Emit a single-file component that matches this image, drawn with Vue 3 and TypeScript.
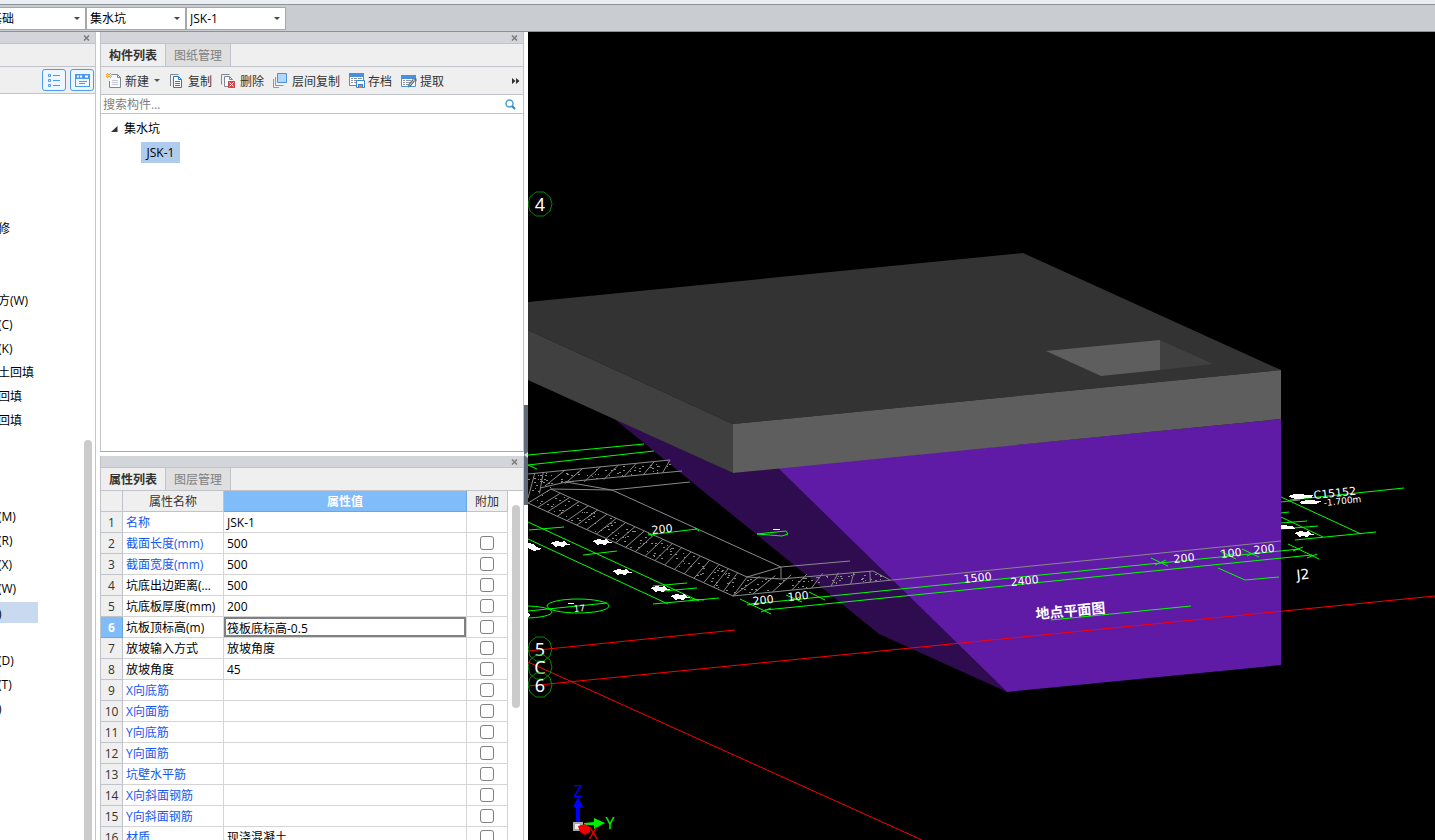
<script setup lang="ts">
import { ref } from 'vue'

interface Combo { label: string; value: string }
interface PropRow { name: string; value: string; linked: boolean; extra: boolean }
interface Segment { x1: number; y1: number; x2: number; y2: number }
interface Dot { x: number; y: number; w: number }

const combos: Combo[] = [
  { label: '构件大类', value: '基础' },
  { label: '构件类型', value: '集水坑' },
  { label: '构件名称', value: 'JSK-1' },
]

const navRows: string[] = [
  '', '', '', '', '', '修', '', '', '方(W)', '(C)', '(K)', '土回填', '回填', '回填',
  '', '', '', '(M)', '(R)', '(X)', '(W)', ')', '', '(D)', '(T)', ')',
]
const activeNav = 21

const search = ref('')
const activeRow = 5

const rows = ref<PropRow[]>([
  { name: '名称', value: 'JSK-1', linked: true, extra: false },
  { name: '截面长度(mm)', value: '500', linked: true, extra: true },
  { name: '截面宽度(mm)', value: '500', linked: true, extra: true },
  { name: '坑底出边距离(mm)', value: '500', linked: false, extra: true },
  { name: '坑底板厚度(mm)', value: '200', linked: false, extra: true },
  { name: '坑板顶标高(m)', value: '筏板底标高-0.5', linked: false, extra: true },
  { name: '放坡输入方式', value: '放坡角度', linked: false, extra: true },
  { name: '放坡角度', value: '45', linked: false, extra: true },
  { name: 'X向底筋', value: '', linked: true, extra: true },
  { name: 'X向面筋', value: '', linked: true, extra: true },
  { name: 'Y向底筋', value: '', linked: true, extra: true },
  { name: 'Y向面筋', value: '', linked: true, extra: true },
  { name: '坑壁水平筋', value: '', linked: true, extra: true },
  { name: 'X向斜面钢筋', value: '', linked: true, extra: true },
  { name: 'Y向斜面钢筋', value: '', linked: true, extra: true },
  { name: '材质', value: '现浇混凝土', linked: true, extra: true },
])

/* Concrete hatch: strokes and aggregate specks inside the section bands */
const hatch: Segment[] = []
const dots: Dot[] = []
let seed = 7
function rand(): number {
  seed = (seed * 16807) % 2147483647
  return seed / 2147483647
}
function band(a: number[], b: number[], c: number[], d: number[], count: number, lean: number, specks: number): void {
  const at = (p: number[], q: number[], t: number) => [p[0] + (q[0] - p[0]) * t, p[1] + (q[1] - p[1]) * t]
  for (let i = 0; i <= count; i++) {
    const t = i / count
    if (t + lean > 1.1) continue
    const low = at(a, b, t)
    const high = at(c, d, Math.min(1, t + lean))
    hatch.push({ x1: low[0], y1: low[1], x2: high[0], y2: high[1] })
  }
  for (let i = 0; i < specks; i++) {
    const t = rand()
    const p = at(at(a, b, t), at(c, d, t), 0.1 + rand() * 0.8)
    dots.push({ x: p[0], y: p[1], w: 1 + Math.round(rand() * 1.4) })
  }
}
band([528, 503], [733, 596], [551, 489], [747, 577], 21, 0, 130)
band([545, 486], [682, 471], [545, 472], [670, 460], 7, 0.16, 50)
band([528, 498], [551, 489], [528, 474], [545, 472], 2, 0.4, 22)
band([733, 596], [890, 580], [747, 577], [873, 571], 8, 0.1, 60)

const greenLines = [
  'M528 455L644 444', 'M528 465L654 451', 'M528 465L537 469',
  'M528 522L699 601', 'M528 539L668 604', 'M529 530L564 527', 'M583 555L617 551',
  'M653 586L687 583', 'M663 591L697 588', 'M653 604L719 598', 'M690 599L704 600',
  'M528 611L607 603', 'M648 535L697 529', 'M648 533L652 536', 'M695 528L699 531',
  'M757 534L786 531L788 534L782 536Z',
  'M751 604L1300 549', 'M765 610L1312 555', 'M740 599L771 614', 'M786 595L802 602',
  'M809 592L825 600', 'M791 601L800 597', 'M747 605L757 603', 'M761 612L771 608',
  'M1151 558L1168 566', 'M1220 551L1236 559', 'M1242 549L1259 557', 'M1288 544L1319 559',
  'M1155 565L1166 560', 'M1224 557L1235 553', 'M1247 556L1256 552', 'M1293 551L1303 547', 'M1307 558L1317 554',
  'M1051 620L1191 606', 'M1218 568L1245 580L1279 577',
  'M1290 500L1404 488', 'M1281 497L1361 534', 'M1295 540L1376 532', 'M1281 517L1323 537',
  'M1281 513L1289 512', 'M1281 523L1307 521', 'M1281 529L1318 526',
]

const marks: { x: number; y: number }[] = [
  { x: 560, y: 544 }, { x: 602, y: 542 }, { x: 622, y: 572 }, { x: 660, y: 589 }, { x: 680, y: 597 },
  { x: 1304, y: 534 },
]

const dims: { x: number; y: number; text: string }[] = [
  { x: 652, y: 534, text: '200' },
  { x: 753, y: 605, text: '200' },
  { x: 788, y: 601, text: '100' },
  { x: 964, y: 583, text: '1500' },
  { x: 1011, y: 586, text: '2400' },
  { x: 1174, y: 563, text: '200' },
  { x: 1221, y: 558, text: '100' },
  { x: 1254, y: 554, text: '200' },
]

const axes: { y: number; text: string }[] = [
  { y: 204, text: '4' }, { y: 649, text: '5' }, { y: 667, text: 'C' }, { y: 685, text: '6' },
]
</script>

<template>
  <div class="app">
    <div class="ribbon-edge"></div>
    <div class="combo-bar">
      <label v-for="c in combos" :key="c.label" class="combo">
        <select :aria-label="c.label"><option>{{ c.value }}</option></select>
      </label>
    </div>

    <main class="work">
      <aside class="nav">
        <div class="dock-head"><button class="close" aria-label="关闭导航"><svg viewBox="0 0 7 6"><path d="M1 0.5L6 5.5M6 0.5L1 5.5" /></svg></button></div>
        <div class="nav-title"></div>
        <div class="nav-tools">
          <button class="view-btn" aria-label="列表视图">
            <svg width="22" height="20" viewBox="0 0 22 20" fill="none" stroke="#4a9bf0">
              <path d="M5.5 4.500h2v2h-2zM5.500 9.500h2v2h-2zM5.500 14.500h2v2h-2z" stroke-width="1" />
              <path d="M10 5.500h7M10 10.500h7M10 15.500h7" />
            </svg>
          </button>
          <button class="view-btn" aria-label="窗口视图">
            <svg width="22" height="20" viewBox="0 0 22 20">
              <path d="M4 4h15v13H4z" fill="#4a9bf0" />
              <path d="M5 9h13v7H5z" fill="#eef6ff" />
              <path d="M6 6.500h2M9 6.500h2M14 6.500h3" stroke="#fff" stroke-width="2" />
              <path d="M8 11.500h8M8 13.500h6" stroke="#4a9bf0" />
            </svg>
          </button>
        </div>
        <div class="nav-body">
          <ul>
            <li v-for="(n, i) in navRows" :key="i"><span :class="{ on: i === activeNav }">{{ n }}</span></li>
          </ul>
          <div class="nav-scroll"><div class="thumb"></div></div>
        </div>
      </aside>

      <section class="panels">
        <div class="panel list-panel">
          <div class="dock-head"><button class="close" aria-label="关闭构件列表"><svg viewBox="0 0 7 6"><path d="M1 0.500L6 5.500M6 0.500L1 5.500" /></svg></button></div>
          <div class="tabs"><button class="tab active">构件列表</button><button class="tab">图纸管理</button></div>
          <div class="tools">
            <button class="tool">
              <svg class="ico" viewBox="0 0 16 16" fill="none">
                <path d="M6 1.500h5.500L14.500 4.500v10h-11V8" stroke="#7c8a96" fill="#fafafa" />
                <path d="M11.500 1.500v3h3" stroke="#7c8a96" />
                <path d="M6 7.500h6M6 9.500h6M6 11.500h6" stroke="#c5cbd1" />
                <path d="M1 0h1v1H1zM4 0h1v1H4zM2 1h2v1H2zM1 2h1v1H1zM4 2h1v1H4zM2 3h2v1H2zM1 4h1v1H1zM4 4h1v1H4zM0 1h1v1H0zM5 1h1v1H5zM0 3h1v1H0zM5 3h1v1H5z" fill="#f39a1e" />
              </svg><span>新建</span><i class="caret"></i>
            </button>
            <button class="tool">
              <svg class="ico" viewBox="0 0 16 16" fill="none">
                <path d="M1.500 13V1.500h8" stroke="#7c8a96" />
                <path d="M4.500 3.500h5l3 3v8h-8z" stroke="#2e78c8" fill="#fff" />
                <path d="M9.500 3.500v3h3M6 8.500h5M6 10.500h5M6 12.500h5" stroke="#2e78c8" />
              </svg><span>复制</span>
            </button>
            <button class="tool">
              <svg class="ico" viewBox="0 0 16 16" fill="none">
                <path d="M0.500 11.500V1.500h8" stroke="#7c8a96" />
                <path d="M7 13.500H3.500v-10h5l3 3V7" stroke="#7c8a96" fill="#fafafa" />
                <path d="M8.500 3.500v3h3" stroke="#7c8a96" />
                <path d="M7 8h7v7H7z" fill="#d2474b" />
                <path d="M8.500 9.500l4 4M12.500 9.500l-4 4" stroke="#fff" />
              </svg><span>删除</span>
            </button>
            <button class="tool">
              <svg class="ico" viewBox="0 0 16 16" fill="none">
                <path d="M0.500 6v8.500H6M2.500 4v8.500h8" stroke="#ee7d31" />
                <path d="M4.500 0.500h9v9h-9z" stroke="#4a90dd" fill="#b5d6fb" />
              </svg><span>层间复制</span>
            </button>
            <button class="tool">
              <svg class="ico" viewBox="0 0 16 16" fill="none">
                <path d="M0.500 1.500h14v11h-14z" stroke="#4a90dd" fill="#fff" />
                <path d="M0 0h15v4H0z" fill="#4a90dd" />
                <path d="M2 5.500h2M5 5.500h3M9 5.500h4M2 7.500h2M5 7.500h3M2 9.500h2M5 9.500h2" stroke="#8b959e" />
                <path d="M7.500 7.500h8v7h-8z" stroke="#3c83d2" fill="#fff" />
                <path d="M9 11h5v4H9z" fill="#3c83d2" /><path d="M10 12h3v3h-3z" fill="#f07c22" />
              </svg><span>存档</span>
            </button>
            <button class="tool">
              <svg class="ico" viewBox="0 0 16 16" fill="none">
                <path d="M0.500 2.500h14v11h-14z" stroke="#4a90dd" fill="#fff" />
                <path d="M0 2h15v4H0z" fill="#4a90dd" />
                <path d="M2 7.500h2M5 7.500h5M2 9.500h2M5 9.500h4M2 11.500h2M5 11.500h2" stroke="#8b959e" />
                <path d="M8 13l5-6" stroke="#5f6870" stroke-width="3" /><path d="M9 12l4-5" stroke="#d5dadd" />
                <path d="M7 14l2-2" stroke="#21a6c4" stroke-width="2" />
                <path d="M12 5.500h3.500v3z" fill="#5f6870" />
              </svg><span>提取</span>
            </button>
            <button class="more" aria-label="更多"><svg width="8" height="6" viewBox="0 0 8 6"><path d="M0 0l3.500 3L0 6zM4 0l3.500 3L4 6z" fill="#333" /></svg></button>
          </div>
          <div class="search">
            <input v-model="search" type="text" placeholder="搜索构件..." aria-label="搜索构件" />
            <button class="find" aria-label="搜索">
              <svg width="11" height="11" viewBox="0 0 11 11" fill="none">
                <circle cx="4.500" cy="4.500" r="3.500" stroke="#4ba0cf" stroke-width="1.500" />
                <path d="M7 7l3 3" stroke="#2c85b8" stroke-width="2" />
              </svg>
            </button>
          </div>
          <div class="tree">
            <div class="tree-root">
              <svg width="7" height="6" viewBox="0 0 7 6"><path d="M6.500 0v6H0z" fill="#333" /></svg>
              <span>集水坑</span>
            </div>
            <div class="tree-leaf"><span>JSK-1</span></div>
          </div>
        </div>

        <div class="panel prop-panel">
          <div class="dock-head"><button class="close" aria-label="关闭属性列表"><svg viewBox="0 0 7 6"><path d="M1 0.500L6 5.500M6 0.500L1 5.500" /></svg></button></div>
          <div class="tabs"><button class="tab active">属性列表</button><button class="tab">图层管理</button></div>
          <div class="grid-wrap">
            <div class="grid-main">
              <table>
                <colgroup><col class="c-no" /><col class="c-name" /><col /><col class="c-add" /></colgroup>
                <thead>
                  <tr><th></th><th>属性名称</th><th class="sel">属性值</th><th>附加</th></tr>
                </thead>
                <tbody>
                  <tr v-for="(r, i) in rows" :key="r.name">
                    <th scope="row" :class="{ sel: i === activeRow }">{{ i + 1 }}</th>
                    <td class="name" :class="{ link: r.linked }">{{ r.name }}</td>
                    <td class="val" :class="{ edit: i === activeRow }">
                      <input v-if="i === activeRow" v-model="r.value" type="text" :aria-label="r.name" />
                      <template v-else>{{ r.value }}</template>
                    </td>
                    <td class="add"><input v-if="r.extra" type="checkbox" :aria-label="r.name + ' 附加'" /></td>
                  </tr>
                </tbody>
              </table>
            </div>
            <div class="grid-scroll"><div class="thumb"></div></div>
          </div>
        </div>
      </section>

      <div class="splitter"><button class="grip" aria-label="折叠面板"><svg width="4" height="6" viewBox="0 0 4 6"><path d="M4 0v6L0 3z" fill="#d5d8dc" /></svg></button></div>

      <section class="scene">
        <svg viewBox="528 32 907 808" preserveAspectRatio="xMinYMin slice" fill="none">
          <path d="M612 417L733 473L778 468L1007 692L879 634Z" fill="#2f0c50" />
          <path d="M778 468L1281 419V665L1007 692Z" fill="#5f1aa6" />

          <g stroke="#8a8a8a">
            <path d="M528 474L670 460M565 482L682 471M540 488L566 482L612 490M551 489L612 490L690 482" />
            <path d="M551 489L747 577L781 579L873 571M528 503L733 596L1281 541" />
            <path d="M612 490L781 567L747 577M781 579V567L850 561" />
            <path d="M1281 502L1300 500" />
            <line v-for="(h, i) in hatch" :key="i" :x1="h.x1" :y1="h.y1" :x2="h.x2" :y2="h.y2" />
          </g>
          <g class="crisp" fill="#8a8a8a">
            <rect v-for="(d, i) in dots" :key="i" :x="d.x" :y="d.y" :width="d.w" height="1" />
          </g>

          <g stroke="#00ff00">
            <path v-for="g in greenLines" :key="g" :d="g" />
            <ellipse cx="578" cy="606" rx="31" ry="7" />
            <ellipse cx="525" cy="612" rx="27" ry="6" />
          </g>
          <g stroke="#ff0000">
            <path d="M528 651L735 630M528 686L1435 596M528 662L922 840" />
          </g>

          <path d="M528 302L1023 253L1281 370L733 424L528 330Z" fill="#333" />
          <path d="M528 330L733 424V473L528 380Z" fill="#404040" />
          <path d="M733 424L1281 370V419L733 473Z" fill="#5e5e5e" />
          <path d="M1046 351L1160 340V370L1101 376Z" fill="#5e5e5e" />
          <path d="M1160 340L1213 364L1160 370Z" fill="#404040" />

          <g class="crisp" fill="#fff">
            <path v-for="m in marks" :key="m.x" :transform="`translate(${m.x} ${m.y})`" d="M-10 -1L-7 -2L-3 -3L1 -2L5 -3L6 -1L11 1L5 1L3 3L-1 2L-5 3L-6 1Z" />
            <path d="M528 543L534 544L536 547L542 549L534 551L528 548ZM1281 525L1293 526L1295 529L1281 529ZM1288 496L1295 494L1313 495L1312 498L1295 499Z" />
            <path d="M1299 502L1307 500L1322 501L1316 504L1302 504ZM568 603L574 603V604L568 604ZM773 529L780 529V530L773 530Z" />
            <path d="M528 613L531 615L528 617Z" />
          </g>

          <g class="dim">
            <text v-for="d in dims" :key="d.x" :transform="`translate(${d.x} ${d.y}) rotate(-6)`">{{ d.text }}</text>
            <text class="small" transform="translate(574 612) rotate(-6)">17</text>
            <text transform="translate(1314 499) rotate(-6)">C15152</text>
            <text class="small" transform="translate(1324 506) rotate(-6)">-1.700m</text>
            <text class="big" transform="translate(1297 580) rotate(-6)">J2</text>
            <text class="title" transform="translate(1036 619) rotate(-5)">地点平面图</text>
          </g>

          <g v-for="a in axes" :key="a.text" :transform="`translate(540 ${a.y})`">
            <path d="M-4 -12H4L10 -7L12 0L10 7L4 12H-4L-10 7L-12 0L-10 -7Z" stroke="#008c00" />
            <text class="axis" y="7">{{ a.text }}</text>
          </g>

          <g>
            <path d="M576 822V807H573L578 797L583 807H580V822Z" fill="#00f" />
            <path d="M584 823L594 822V818L605 823L594 829V825H584Z" fill="#0e0" />
            <path d="M573 822H583V831H573Z" fill="#aaa" /><path d="M575 824H580V829H575Z" fill="#eee" />
            <path d="M578 826L585 824L590 827V832L585 835L580 832Z" fill="#f00000" />
            <text class="gizmo" x="578" y="797" fill="#00f">Z</text>
            <text class="gizmo" x="610" y="829" fill="#00f000">Y</text>
            <text class="gizmo" x="593" y="839" fill="#f00000">X</text>
          </g>
        </svg>
      </section>
    </main>
  </div>
</template>

<style>
html, body { background: #fff; overflow: hidden; }
</style>

<style scoped>
.app {
  height: 100vh;
  display: flex;
  flex-direction: column;
  overflow: hidden;
  font: 12px/16px "Open Sans", "Noto Sans CJK SC", sans-serif;
  color: #000;
}
.app *, .app *::before, .app *::after { box-sizing: border-box; }
button, input, select { font: inherit; color: inherit; margin: 0; padding: 0; border: 0; background: none; outline: none; }
button { display: flex; align-items: center; }
.ribbon-edge { height: 5px; flex: none; background: #eaedf1; border-bottom: 1px solid #8d9296; }
.combo-bar {
  height: 27px;
  flex: none;
  display: flex;
  align-items: center;
  margin-left: -14px;
  background: #c9ccd1;
  border-bottom: 1px solid #8d9296;
}
.combo { position: relative; width: 100px; height: 23px; }
.combo select { appearance: none; width: 100%; height: 100%; padding: 2px 0 0 3px; background: #fff; border: 1px solid #a4a7ab; border-radius: 0; }
.combo::after { content: ""; position: absolute; right: 6px; top: 10px; border: 3px solid transparent; border-top-color: #444; border-bottom: 0; }

.work { flex: 1; min-height: 0; display: flex; }
.dock-head { height: 12px; flex: none; display: flex; justify-content: flex-end; align-items: center; padding-right: 5px; background: #d3d5da; border-bottom: 1px solid #c0c3c9; }
.close svg { display: block; width: 7px; height: 6px; stroke: #7b7b7b; stroke-width: 1.5; }

.nav { width: 96px; flex: none; display: flex; flex-direction: column; border-right: 1px solid #c4c6cc; }
.nav-title { height: 23px; background: #efefef; border-bottom: 1px solid #c0c3c9; }
.nav-tools { height: 27px; display: flex; align-items: center; justify-content: flex-end; gap: 4px; padding-right: 1px; background: #efefef; border-bottom: 1px solid #c0c3c9; }
.view-btn { width: 24px; height: 22px; background: #eef6ff; border: 1px solid #4a9bf0; border-radius: 3px; }
.nav-body { flex: 1; min-height: 0; display: flex; justify-content: space-between; }
.nav ul { list-style: none; margin: 0; padding: 2px 0 0; }
.nav li { height: 24px; display: flex; align-items: center; white-space: nowrap; text-indent: -2px; }
.nav li span { padding-top: 2px; }
.nav li .on { width: 38px; height: 21px; line-height: 19px; background: #c9d9f0; }
.nav-scroll { width: 11px; display: flex; flex-direction: column; }
.nav-scroll::before { content: ""; flex: 346 0 0; }
.nav-scroll .thumb { width: 8px; flex: 400 0 0; background: #cbcbcb; border-radius: 4px 4px 0 0; }

.panels { width: 424px; flex: none; margin-left: 4px; display: flex; flex-direction: column; gap: 4px; }
.panel { min-height: 0; display: flex; flex-direction: column; border: 1px solid #c0c3c9; border-top: 0; overflow: hidden; }
.list-panel { flex: 420 0 0; border-bottom-color: #a8a8a8; }
.prop-panel { flex: 384 0 0; border-bottom: 0; }
.tabs { height: 23px; flex: none; display: flex; background: #efefef; border-bottom: 1px solid #c0c3c9; }
.tab { width: 65px; padding-top: 2px; justify-content: center; color: #808080; background: #dfdfdf; border-right: 1px solid #c0c3c9; }
.tab.active { font-weight: 700; color: #333; background: #efefef; }
.tools { height: 28px; flex: none; display: flex; gap: 9px; padding: 0 3px 0 5px; background: #efefef; border-bottom: 1px solid #c0c3c9; color: #333; }
.tool { white-space: nowrap; }
.tool span { padding-top: 2px; }
.ico { width: 16px; height: 16px; margin-right: 3px; }
.caret { margin-left: 5px; border: 3px solid transparent; border-top-color: #555; border-bottom: 0; }
.more { margin-left: auto; }
.search { height: 19px; flex: none; display: flex; padding: 0 7px 0 2px; border-bottom: 1px solid #c0c3c9; }
.search input { flex: 1; min-width: 0; padding-top: 2px; }
.search input::placeholder { color: #808080; opacity: 1; }
.tree { flex: 1; background: #fff; padding-top: 3px; }
.tree-root { height: 24px; display: flex; align-items: center; gap: 6px; padding-left: 10px; }
.tree-leaf { height: 24px; display: flex; align-items: center; padding: 0 0 2px 40px; }
.tree-leaf span { min-width: 39px; height: 21px; line-height: 21px; text-align: center; background: #afcbee; }

.grid-wrap { flex: 1; min-height: 0; display: flex; overflow: hidden; }
.grid-main { flex: 1; min-width: 0; }
table { width: 100%; table-layout: fixed; border-collapse: separate; border-spacing: 0; }
.c-no { width: 22px; }
.c-name { width: 101px; }
.c-add { width: 41px; }
th, td { height: 21px; padding: 2px 0 0; line-height: 18px; white-space: nowrap; overflow: hidden; border-right: 1px solid #d4d4d4; border-bottom: 1px solid #d4d4d4; }
th { font-weight: 400; color: #333; background: #efefef; text-align: center; border-color: #c0c3c9; }
thead th.sel { background: #80bbfa; border-color: #6aa5e6; color: #fff; font-weight: 700; }
tbody th.sel { background: #80bbfa; border-color: #6aa5e6; color: #fff; font-weight: 700; }
td.name { padding: 2px 3px 0; text-overflow: ellipsis; }
td.link { color: #1458ee; }
td.val { padding-left: 3px; }
td.edit { padding: 0; }
td.edit input { display: block; width: 100%; height: 20px; padding: 2px 0 0 1px; border: 2px solid #808080; }
td.add { padding: 0; text-align: center; }
td.add input { appearance: none; display: block; width: 14px; height: 14px; margin: 0 auto; border: 1px solid #808080; border-radius: 3px; background: #fff; }
.grid-scroll { width: 15px; flex: none; padding: 14px 3px 0 4px; }
.grid-scroll .thumb { height: 203px; background: #cbcbcb; border-radius: 4px; }

.splitter { width: 4px; flex: none; display: flex; flex-direction: column; background: #fff; }
.splitter::before { content: ""; flex: 373 0 0; }
.splitter::after { content: ""; flex: 335 0 0; }
.grip { width: 4px; flex: 100 0 0; background: #5f6b78; }

.scene { flex: 1; min-width: 0; background: #000; overflow: hidden; }
.scene svg { display: block; width: 100%; height: 100%; }
.crisp { shape-rendering: crispEdges; }
.dim text { font: 11px "DejaVu Sans", "Noto Sans CJK SC", sans-serif; fill: #fff; }
.dim .small { font-size: 9px; }
.dim .big { font-size: 14px; }
.dim .title { font-size: 14px; font-weight: 700; }
.axis { font: 18px "Noto Sans", sans-serif; fill: #fff; text-anchor: middle; }
.gizmo { font: 16px "Noto Sans", sans-serif; text-anchor: middle; }
</style>
